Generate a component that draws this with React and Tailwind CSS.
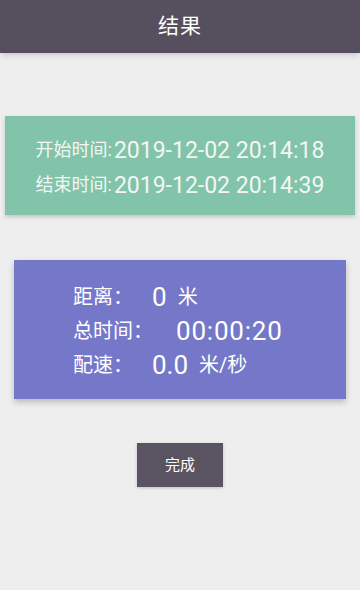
import React from 'react';

const cjk = { fontFamily: 'Roboto, "Noto Sans CJK SC", sans-serif' };

const Stat = ({ label, value, unit, valueClass }) => (
    <div className="flex items-center h-[34px]">
        <span className="text-[20px] leading-none text-white">{label}</span>
        <span className={`text-[26px] leading-none text-white ${valueClass}`}>{value}</span>
        {unit && <span className="ml-[11px] text-[20px] leading-none text-white">{unit}</span>}
    </div>
);

const TimeRow = ({ label, value }) => (
    <div className="flex items-center h-[35px] text-[#f3f6f4]">
        <span className="text-[18px] leading-none">{label}</span>
        <span className="ml-[2px] text-[23px] leading-none">{value}</span>
    </div>
);

const App = () => {
    return (
        <div className="w-[360px] h-[590px] bg-[#eeeeee] overflow-hidden flex flex-col" style={cjk}>
            <div className="h-[53px] bg-[#56505e] flex items-center justify-center shadow-md">
                <h1 className="text-[21px] text-white tracking-[1px]">结果</h1>
            </div>

            <div className="mt-[63px] mx-[5px] h-[99px] pt-[4px] bg-[#81c4aa] shadow-[0_2px_4px_rgba(0,0,0,0.18)] flex flex-col items-center justify-center">
                <TimeRow label="开始时间:" value="2019-12-02 20:14:18" />
                <TimeRow label="结束时间:" value="2019-12-02 20:14:39" />
            </div>

            <div className="mt-[45px] mx-[14px] h-[139px] pt-[3px] bg-[#7577c8] shadow-[0_3px_6px_rgba(0,0,0,0.22)] flex flex-col justify-center pl-[59px]">
                <Stat label="距离：" value="0" unit="米" valueClass="ml-[19px]" />
                <Stat label="总时间：" value="00:00:20" valueClass="ml-[23px] tracking-[0.8px]" />
                <Stat label="配速：" value="0.0" unit="米/秒" valueClass="ml-[19px]" />
            </div>

            <button
                type="button"
                className="mt-[44px] mx-auto w-[86px] h-[44px] bg-[#5a5462] text-white text-[15px] shadow-[0_1px_3px_rgba(0,0,0,0.2)]"
            >
                完成
            </button>
        </div>
    );
};

export default App;
